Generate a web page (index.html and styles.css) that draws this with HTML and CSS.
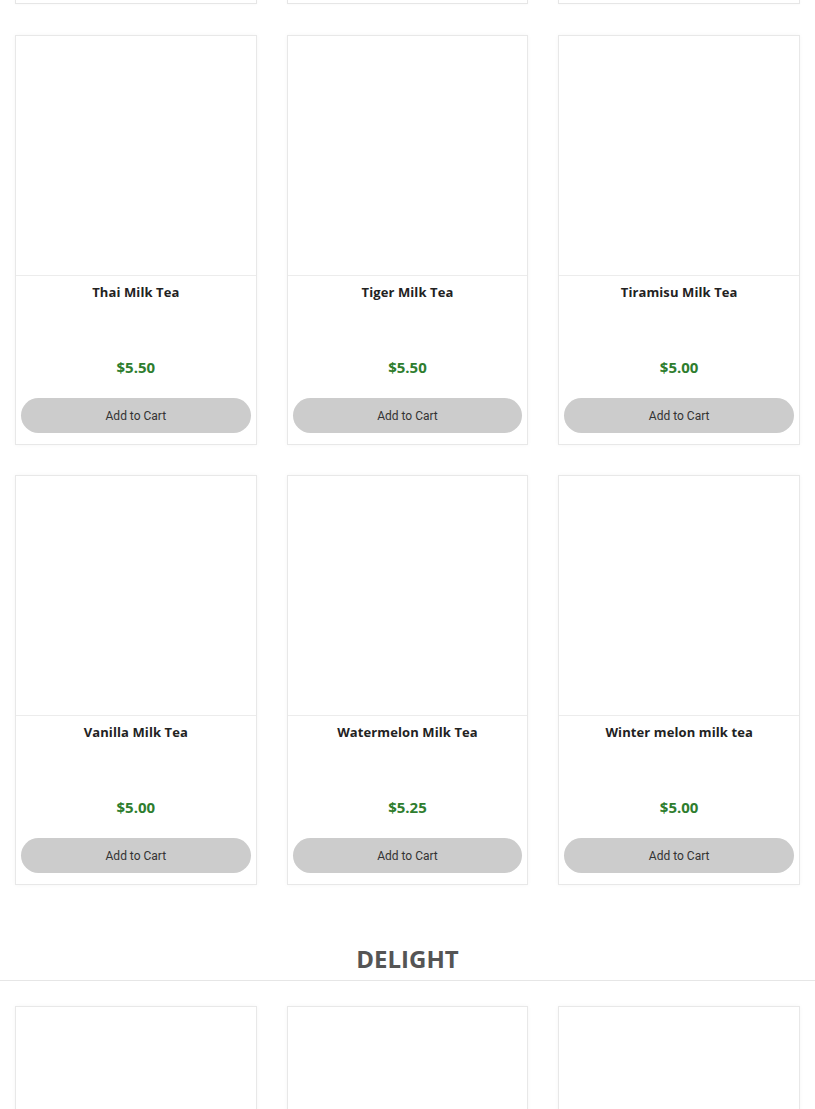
FILE: index.html
```html
<!DOCTYPE html>
<html>
<head>
<meta charset="utf-8">
<link rel="stylesheet" href="styles.css">
</head>
<body>
<div class="grid prev">
  <div class="stub"></div><div class="stub"></div><div class="stub"></div>
</div>
<div class="grid">
  <div class="card"><div class="img"></div><div class="body"><div class="title">Thai Milk Tea</div><div class="price">$5.50</div><button class="btn">Add to Cart</button></div></div>
  <div class="card"><div class="img"></div><div class="body"><div class="title">Tiger Milk Tea</div><div class="price">$5.50</div><button class="btn">Add to Cart</button></div></div>
  <div class="card"><div class="img"></div><div class="body"><div class="title">Tiramisu Milk Tea</div><div class="price">$5.00</div><button class="btn">Add to Cart</button></div></div>
  <div class="card"><div class="img"></div><div class="body"><div class="title">Vanilla Milk Tea</div><div class="price">$5.00</div><button class="btn">Add to Cart</button></div></div>
  <div class="card"><div class="img"></div><div class="body"><div class="title">Watermelon Milk Tea</div><div class="price">$5.25</div><button class="btn">Add to Cart</button></div></div>
  <div class="card"><div class="img"></div><div class="body"><div class="title">Winter melon milk tea</div><div class="price">$5.00</div><button class="btn">Add to Cart</button></div></div>
</div>
<h2 class="section">DELIGHT</h2>
<div class="grid">
  <div class="card"><div class="img"></div></div>
  <div class="card"><div class="img"></div></div>
  <div class="card"><div class="img"></div></div>
</div>
</body>
</html>
```
FILE: styles.css
```css
html, body {
  margin: 0;
  padding: 0;
  background: #fff;
  font-family: "Open Sans", "Liberation Sans", sans-serif;
}
body {
  width: 815px;
  overflow: hidden;
}
.grid {
  display: grid;
  grid-template-columns: repeat(3, 1fr);
  column-gap: 30px;
  row-gap: 30px;
  padding: 0 15px;
  margin-bottom: 31px;
}
.prev {
  margin-bottom: 31px;
}
.stub {
  height: 3px;
  border: 1px solid #e6e6e6;
  border-top: none;
  box-shadow: 0 0 3px rgba(0,0,0,0.04);
}
.card {
  border: 1px solid #e8e8e8;
  box-shadow: 0 0 4px rgba(0,0,0,0.04);
  background: #fff;
  display: flex;
  flex-direction: column;
}
.img {
  height: 239px;
  border-bottom: 1px solid #ececec;
}
.body {
  display: flex;
  flex-direction: column;
  align-items: stretch;
  padding: 7px 5px 11px;
}
.title {
  font-size: 13px;
  font-weight: 700;
  color: #222;
  line-height: 18px;
  height: 74px;
  text-align: center;
  letter-spacing: 0.1px;
}
.price {
  font-size: 15px;
  font-weight: 700;
  color: #2e7d2e;
  line-height: 20px;
  text-align: center;
  margin-bottom: 21px;
}
.btn {
  height: 35px;
  border: none;
  border-radius: 18px;
  background: #cccccc;
  color: #333;
  font-family: Roboto, "Liberation Sans", sans-serif;
  font-size: 12px;
  cursor: pointer;
}
.section {
  margin: 59px 0 25px;
  padding-bottom: 6px;
  border-bottom: 1px solid #e6e6e6;
  text-align: center;
  font-size: 24px;
  line-height: 30px;
  font-weight: 700;
  color: #555;
  font-family: "Open Sans", "Liberation Sans", sans-serif;
}
.section + .grid .card .img {
  height: 300px;
}
```
